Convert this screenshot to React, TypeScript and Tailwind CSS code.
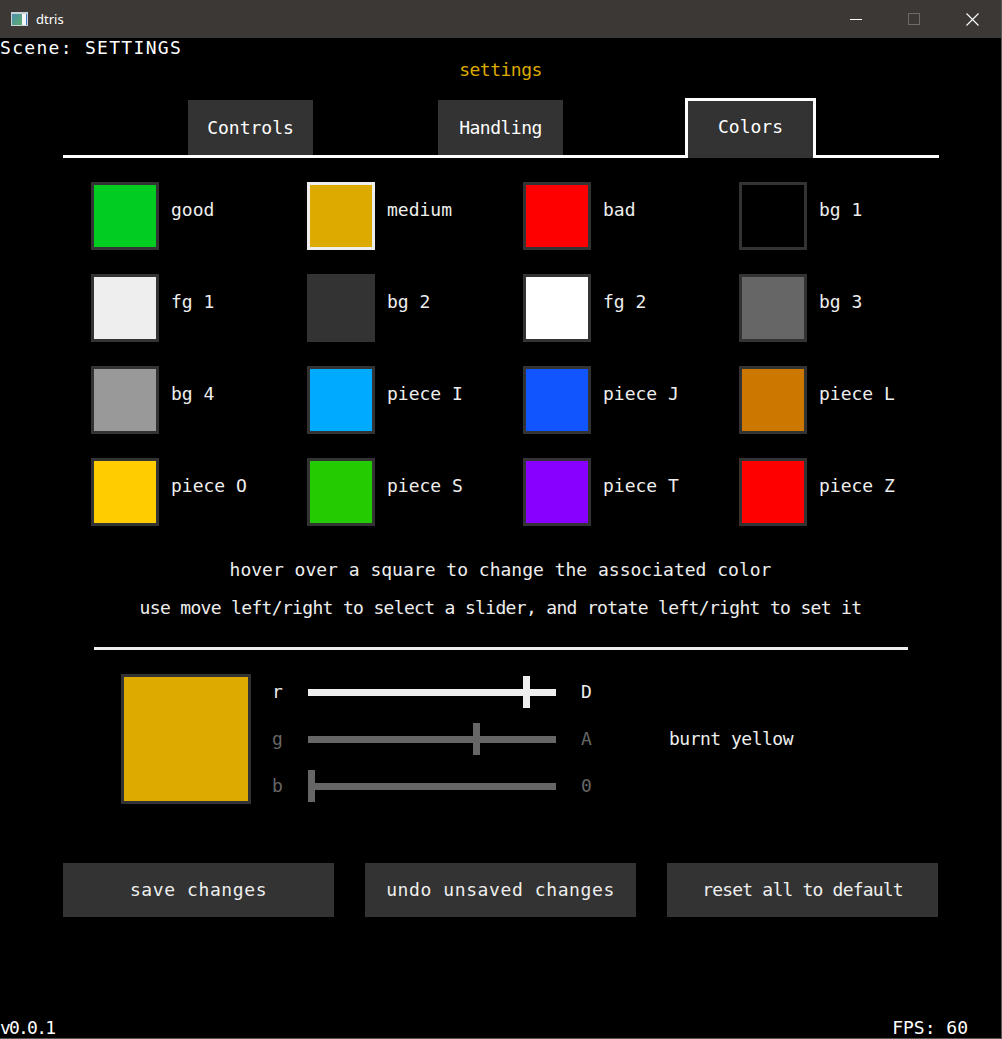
import React from 'react';

type Swatch = { label: string; fill: string; selected?: boolean };

const swatches: Swatch[] = [
  { label: 'good', fill: 'bg-[#00cc22]' },
  { label: 'medium', fill: 'bg-[#ddaa00]', selected: true },
  { label: 'bad', fill: 'bg-[#ff0000]' },
  { label: 'bg 1', fill: 'bg-[#000000]' },
  { label: 'fg 1', fill: 'bg-[#eeeeee]' },
  { label: 'bg 2', fill: 'bg-[#333333]' },
  { label: 'fg 2', fill: 'bg-[#ffffff]' },
  { label: 'bg 3', fill: 'bg-[#666666]' },
  { label: 'bg 4', fill: 'bg-[#999999]' },
  { label: 'piece I', fill: 'bg-[#00aaff]' },
  { label: 'piece J', fill: 'bg-[#1155ff]' },
  { label: 'piece L', fill: 'bg-[#cc7700]' },
  { label: 'piece O', fill: 'bg-[#ffcc00]' },
  { label: 'piece S', fill: 'bg-[#22cc00]' },
  { label: 'piece T', fill: 'bg-[#8800ff]' },
  { label: 'piece Z', fill: 'bg-[#ff0000]' },
];

const channels = [
  { name: 'r', value: 13, hex: 'D', active: true },
  { name: 'g', value: 10, hex: 'A', active: false },
  { name: 'b', value: 0, hex: '0', active: false },
];

const TRACK_WIDTH = 248;

function TitleBar() {
  return (
    <div className="h-[38px] shrink-0 bg-[#3c3835] flex items-center">
      <svg className="ml-[11px]" width="17" height="14" viewBox="0 0 17 14">
        <defs>
          <linearGradient id="ico" x1="0" y1="0" x2="1" y2="1">
            <stop offset="0" stopColor="#4a8fb0" />
            <stop offset="1" stopColor="#5fae6a" />
          </linearGradient>
        </defs>
        <rect x="0" y="0" width="17" height="14" fill="#c8d2da" />
        <rect x="1" y="2" width="10" height="11" fill="url(#ico)" />
        <rect x="11" y="2" width="4" height="11" fill="#f4f6f8" />
        <rect x="15" y="2" width="1" height="11" fill="#3a78c8" />
      </svg>
      <span className="ml-[8px] font-['Noto_Sans',sans-serif] text-[13px] leading-[14px] text-white">dtris</span>
      <div className="ml-auto flex h-full">
        <div className="w-[58px] h-full flex items-center justify-center">
          <div className="w-[12px] h-[1px] bg-white" />
        </div>
        <div className="w-[58px] h-full flex items-center justify-center">
          <div className="w-[12px] h-[12px] border border-[#6e6b68]" />
        </div>
        <div className="w-[58px] h-full flex items-center justify-center">
          <svg width="13" height="13" viewBox="0 0 13 13">
            <path d="M0.5 0.5 L12.5 12.5 M12.5 0.5 L0.5 12.5" stroke="#ffffff" strokeWidth="1.1" />
          </svg>
        </div>
      </div>
    </div>
  );
}

export default function App() {
  return (
    <div className="w-[1002px] h-[1039px] bg-black border-r border-b border-[#565656] flex flex-col overflow-hidden font-['DejaVu_Sans_Mono',monospace] text-[18px] leading-[18px] text-[#eeeeee]">
      <TitleBar />
      <div className="relative flex-1 flex flex-col">
        <div className="mt-[1px] h-[18px] whitespace-nowrap tracking-[1.3px] text-white">Scene: SETTINGS</div>
        <div className="mt-[4px] h-[18px] text-center text-[#ddaa00] tracking-[-0.5px]">settings</div>

        {/* tabs */}
        <div className="mt-[19px] ml-[63px] w-[876px] h-[60px] border-b-[3px] border-white flex items-end">
          <div className="ml-[125px] w-[125px] h-[55px] bg-[#333333] flex items-center justify-center text-white">
            Controls
          </div>
          <div className="ml-[125px] w-[125px] h-[55px] bg-[#333333] flex items-center justify-center text-white tracking-[-0.5px]">
            Handling
          </div>
          <div className="ml-[122px] w-[131px] h-[60px] -mb-[3px] pb-[5px] border-[3px] border-b-0 border-white bg-[#333333] flex items-center justify-center text-white">
            Colors
          </div>
        </div>

        {/* swatch grid */}
        <div className="mt-[24px] ml-[91px] grid grid-cols-[repeat(4,216px)] gap-y-[24px]">
          {swatches.map((s) => (
            <div key={s.label} className="flex items-start">
              <div
                className={`w-[68px] h-[68px] border-[3px] ${s.selected ? 'border-[#eeeeee]' : 'border-[#333333]'} ${s.fill}`}
              />
              <div className="ml-[12px] mt-[19px] whitespace-nowrap">{s.label}</div>
            </div>
          ))}
        </div>

        <div className="mt-[35px] h-[18px] text-center whitespace-nowrap">
          hover over a square to change the associated color
        </div>
        <div className="mt-[20px] h-[18px] text-center whitespace-nowrap tracking-[-0.67px]">
          use move left/right to select a slider, and rotate left/right to set it
        </div>

        <div className="mt-[30px] ml-[94px] w-[814px] h-[3px] bg-[#eeeeee]" />

        {/* color editor */}
        <div className="mt-[24px] ml-[121px] h-[130px] flex items-center">
          <div className="w-[130px] h-[130px] border-[3px] border-[#333333] bg-[#ddaa00]" />
          <div className="ml-[21px] mt-[2px] self-start flex flex-col gap-[15px]">
            {channels.map((c) => (
              <div
                key={c.name}
                className={`h-[32px] flex items-center ${c.active ? 'text-[#eeeeee]' : 'text-[#666666]'}`}
              >
                <div className="w-[36px]">{c.name}</div>
                <div className="relative w-[248px] h-[32px] flex items-center">
                  <div className={`w-full h-[7px] ${c.active ? 'bg-[#eeeeee]' : 'bg-[#666666]'}`} />
                  <div
                    className={`absolute top-0 w-[7px] h-[32px] ${c.active ? 'bg-[#eeeeee]' : 'bg-[#666666]'}`}
                    style={{ left: Math.round((c.value / 15) * TRACK_WIDTH) }}
                  />
                </div>
                <div className="ml-[25px] w-[30px]">{c.hex}</div>
              </div>
            ))}
          </div>
          <div className="ml-[58px] whitespace-nowrap tracking-[-0.5px]">burnt yellow</div>
        </div>

        {/* actions */}
        <div className="mt-[59px] ml-[63px] flex gap-[31px]">
          <button className="w-[271px] h-[54px] bg-[#333333] flex items-center justify-center text-[#eeeeee] tracking-[0.6px]">
            save changes
          </button>
          <button className="w-[271px] h-[54px] bg-[#333333] flex items-center justify-center text-[#eeeeee] tracking-[0.6px]">
            undo unsaved changes
          </button>
          <button className="w-[271px] h-[54px] bg-[#333333] flex items-center justify-center text-[#eeeeee] tracking-[-0.8px]">
            reset all to default
          </button>
        </div>

        <div className="absolute bottom-[1px] left-0 tracking-[-1.8px] text-white">v0.0.1</div>
        <div className="absolute bottom-[1px] right-[33px] text-white">FPS: 60</div>
      </div>
    </div>
  );
}
